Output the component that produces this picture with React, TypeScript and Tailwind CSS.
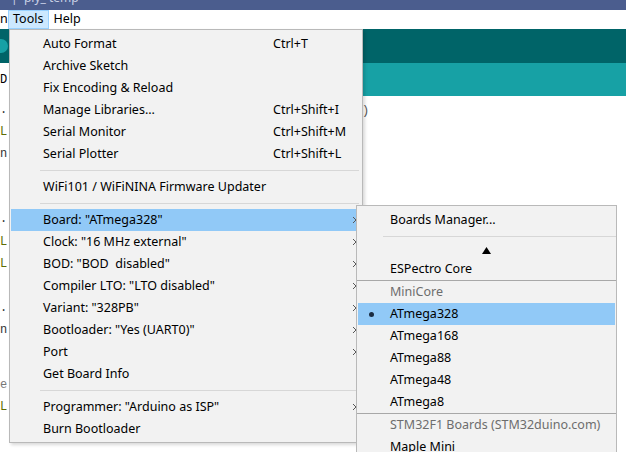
import React from 'react';

const font = { fontFamily: '"Noto Sans", "Open Sans", Arial, sans-serif' };

function Chevron() {
  return (
    <svg width="5" height="8" viewBox="0 0 5 8" className="shrink-0">
      <path d="M1 1 L4 4 L1 7" fill="none" stroke="#555" strokeWidth="1" />
    </svg>
  );
}

type MainItem =
  | { kind: 'item'; label: string; shortcut?: string; sub?: boolean; active?: boolean }
  | { kind: 'sep' };

const mainItems: MainItem[] = [
  { kind: 'item', label: 'Auto Format', shortcut: 'Ctrl+T' },
  { kind: 'item', label: 'Archive Sketch' },
  { kind: 'item', label: 'Fix Encoding & Reload' },
  { kind: 'item', label: 'Manage Libraries...', shortcut: 'Ctrl+Shift+I' },
  { kind: 'item', label: 'Serial Monitor', shortcut: 'Ctrl+Shift+M' },
  { kind: 'item', label: 'Serial Plotter', shortcut: 'Ctrl+Shift+L' },
  { kind: 'sep' },
  { kind: 'item', label: 'WiFi101 / WiFiNINA Firmware Updater' },
  { kind: 'sep' },
  { kind: 'item', label: 'Board: "ATmega328"', sub: true, active: true },
  { kind: 'item', label: 'Clock: "16 MHz external"', sub: true },
  { kind: 'item', label: 'BOD: "BOD\u00a0 disabled"', sub: true },
  { kind: 'item', label: 'Compiler LTO: "LTO disabled"', sub: true },
  { kind: 'item', label: 'Variant: "328PB"', sub: true },
  { kind: 'item', label: 'Bootloader: "Yes (UART0)"', sub: true },
  { kind: 'item', label: 'Port', sub: true },
  { kind: 'item', label: 'Get Board Info' },
  { kind: 'sep' },
  { kind: 'item', label: 'Programmer: "Arduino as ISP"', sub: true },
  { kind: 'item', label: 'Burn Bootloader' },
];

// left-edge code fragments peeking out from behind the menu
const codeLines: { t: string; h: number; c?: string }[] = [
  { t: '.', h: 22 },
  { t: 'L', h: 22, c: '#5e6d03' },
  { t: 'n', h: 65 },
  { t: '.', h: 23 },
  { t: 'L', h: 22, c: '#5e6d03' },
  { t: 'L', h: 44, c: '#5e6d03' },
  { t: '.', h: 22 },
  { t: 'n', h: 55 },
  { t: 'e', h: 22, c: '#777' },
  { t: 'L', h: 22, c: '#5e6d03' },
];

function MainMenu() {
  return (
    <div className="absolute left-[9px] top-[29px] w-[354px] h-[414px] bg-[#f2f2f2] border border-[#b9b9b9] pt-[3px] shadow-[2px_2px_3px_rgba(0,0,0,0.15)]">
      {mainItems.map((it, i) =>
        it.kind === 'sep' ? (
          <div key={i} className="h-[11px] flex items-center pl-[30px] pr-[3px]">
            <div className="h-px w-full bg-[#d7d7d7]" />
          </div>
        ) : (
          <div
            key={i}
            className={`h-[22px] ml-[1px] mr-[4px] flex items-center text-[12.5px] text-black ${
              it.active ? 'bg-[#91c9f7]' : ''
            }`}
          >
            <span className="pl-[32px] w-[262px] whitespace-pre">{it.label}</span>
            <span className="flex-1">{it.shortcut}</span>
            {it.sub && (
              <span className="pr-[1px]">
                <Chevron />
              </span>
            )}
          </div>
        )
      )}
    </div>
  );
}

function BoardsMenu() {
  const row = 'h-[22px] mx-[1px] flex items-center text-[12.5px] pl-[32px]';
  return (
    <div className="absolute left-[356px] top-[205px] w-[261px] h-[260px] bg-[#f2f2f2] border border-[#b9b9b9] pt-[3px]">
      <div className={row}>Boards Manager...</div>
      <div className="h-[11px] flex items-center pl-[26px]">
        <div className="h-px w-full bg-[#d7d7d7]" />
      </div>
      <div className="h-[16px] flex items-center justify-center">
        <svg width="9" height="7" viewBox="0 0 9 7">
          <path d="M4.5 0 L9 7 L0 7 Z" fill="#000" />
        </svg>
      </div>
      <div className={row}>ESPectro Core</div>
      <div className="h-px bg-[#a8a8a8]" />
      <div className={`${row} text-[#6d6d6d]`}>MiniCore</div>
      <div className={`${row} bg-[#91c9f7] relative`}>
        <span className="absolute left-[11px] top-[9px] w-[5px] h-[5px] rounded-full bg-[#1b2c42]" />
        ATmega328
      </div>
      <div className={row}>ATmega168</div>
      <div className={row}>ATmega88</div>
      <div className={row}>ATmega48</div>
      <div className={row}>ATmega8</div>
      <div className="h-px bg-[#a8a8a8]" />
      <div className={`${row} text-[#6d6d6d]`}>STM32F1 Boards (STM32duino.com)</div>
      <div className={row}>Maple Mini</div>
    </div>
  );
}

export default function App() {
  return (
    <div className="relative w-[626px] h-[452px] overflow-hidden bg-white" style={font}>
      {/* Title bar */}
      <div className="h-[10px] bg-[#4b5d8e] overflow-hidden">
        <div className="text-[12px] leading-[12px] -mt-[8px] pl-[2px] text-[#c9d1e6] whitespace-pre">
          {'– |  ply_ temp'}
        </div>
      </div>

      {/* Menu bar */}
      <div className="h-[19px] flex items-center text-[12.5px] text-black">
        <span className="w-[9px] overflow-hidden pl-[1px] -ml-[1px]">n</span>
        <span className="h-[19px] pl-[4px] pr-[5px] flex items-center bg-[#cce8ff] border border-[#99d1ff]">Tools</span>
        <span className="pl-[4px]">Help</span>
      </div>

      {/* Toolbar */}
      <div className="h-[34px] bg-[#006468] flex items-center">
        <div className="ml-[-6px] w-[14px] h-[14px] rounded-full bg-[#17a1a5]" />
      </div>
      {/* Tab bar */}
      <div className="h-[33px] bg-[#17a1a5] flex">
        <div className="w-[9px] bg-white flex items-center text-[12px]" style={{ fontFamily: '"Liberation Mono", monospace' }}>
          D
        </div>
      </div>

      {/* Editor */}
      <div className="relative flex" style={{ fontFamily: '"Liberation Mono", monospace' }}>
        <div className="w-[9px] pt-[3px] text-[12px] text-[#333]">
          {codeLines.map((l, i) => (
            <div key={i} style={{ height: l.h, color: l.c }} className="leading-[22px]">
              {l.t}
            </div>
          ))}
        </div>
        <div className="ml-[353px] pt-[4px] text-[12px] leading-[22px] text-[#555]">)</div>
      </div>

      <MainMenu />
      <BoardsMenu />
    </div>
  );
}
